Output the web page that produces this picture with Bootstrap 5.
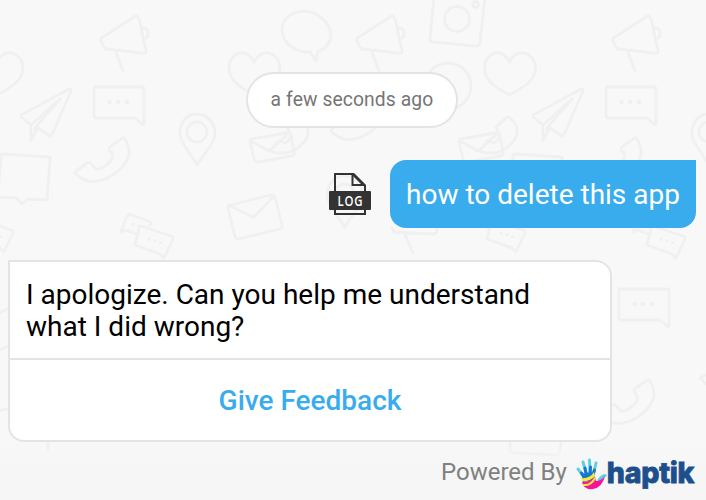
<!DOCTYPE html>
<html lang="en">
<head>
<meta charset="utf-8">
<meta name="viewport" content="width=device-width, initial-scale=1">
<title>Chat</title>
<link rel="stylesheet" href="https://cdn.jsdelivr.net/npm/bootstrap@5.3.0/dist/css/bootstrap.min.css">
<style>
body{font-family:Roboto,sans-serif;background:#f8f8f8}
.chat{height:500px;width:706px}
.wallpaper{z-index:0;fill:none;stroke:#f0f0f0;stroke-width:2.8;stroke-linejoin:round;stroke-linecap:round}
.wallpaper .dots{stroke-width:4.5}
.thread{z-index:1;padding:72px 10px 0 8px}
.stamp{width:212px;height:56px;border:2px solid #e4e4e4!important;color:#757575;font-size:19.3px;margin-left:238px;letter-spacing:.1px}
.outgoing{margin-top:32px}
.bubble-out{width:306px;height:68px;background:#39aced;border-radius:16px 0 16px 16px;font-size:28px;padding-top:1px}
.reply{width:604px;height:182px;margin-top:32px;border:2px solid #e4e4e4;border-radius:0 16px 16px 16px}
.reply-text{height:98px;padding:17px 16px 15px;font-size:28px;line-height:32px;color:#000;border-bottom:2px solid #e4e4e4}
.reply-btn{color:#39aced;font-size:28px;font-weight:500;border:0;padding:2px 0 0}
.powered{height:58px;padding:2px 12px 0 0;color:#808080;font-size:24px;background:linear-gradient(rgba(246,246,246,0),#f6f6f6 50%)}
.brand{font-family:Inter,sans-serif;font-weight:800;font-size:28.5px;letter-spacing:-.25px;margin-right:-.25px;color:#1c4f8b;-webkit-text-stroke:.8px #1c4f8b;padding-top:3px}
</style>
<script src="https://cdn.jsdelivr.net/npm/bootstrap@5.3.0/dist/js/bootstrap.bundle.min.js"></script>
</head>
<body class="overflow-hidden">
<main class="chat position-relative overflow-hidden d-flex flex-column">
<svg class="wallpaper position-absolute top-0 start-0" width="706" height="500" aria-hidden="true">
<defs>
<path id="horn" d="M103 37L134 17Q137 14 139 19L146 50Q147 54 142 53L107 49Q104 49 103 45L101 41Q101 38 103 37M115 50L123 71M142 28C148 27 150 34 146 38"/>
<path id="heart" d="M0 62C-8 46-25 53-25 68C-25 81-13 88 0 95C13 88 26 81 26 68C26 53 8 46 0 62Z"/>
<path id="plane" d="M21 115L69 89Q72 88 71 91L52 135Q51 137 49 135L38 128L31 140V125L21 117ZM31 125L60 99L35 128V134"/>
<g id="note"><path d="M95 87H142Q144 87 144 89V123Q144 126 141 123L135 118H96Q94 118 94 116V89Q94 87 95 87Z"/><path class="dots" d="M109.500 102h.1M118 102h.1M127 102h.1"/></g>
<g id="pin"><path d="M197 165L184 145C174 129 184 114 197 114S221 129 211 145Z"/><circle cx="197" cy="132" r="10"/></g>
<path id="phone" d="M124 138Q129 143 129 154Q127 165 113 175Q90 189 75 173L76 171L87 163Q90 161 92 165L96 169Q99 170 105 166Q115 159 112 154L109 149Q109 147 111 146L121 139Q123 137 124 138Z"/>
<path id="sheet" d="M2 154L48 157Q51 157 50 160L47 200L28 199L22 204L17 198L-2 197L1 157Q0 154 2 154Z"/>
<g id="talk"><path d="M141 226L171 236Q174 237 173 239L164 258L160 254L135 245L139 228Q140 225 141 226ZM150 225L151 222L129 214L126 218L121 232L126 230L136 234"/><path stroke-width="3" stroke-dasharray=".1 6" d="M149 239L162 243M133 224L140 227"/></g>
<g id="mail"><path d="M252 139L286 133Q290 132 291 135L294 153Q295 155 291 156L258 162Q255 162 254 159L250 142Q250 139 252 139ZM251 141L269 151L288 134"/><path d="M297 118Q299 116 301 118Q312 127 306 139Q296 154 280 153Q270 153 272 149L278 141L286 143Q290 140 291 135L287 127Z"/></g>
</defs>
<use href="#horn"/><use href="#horn" x="256"/><use href="#horn" x="512"/>
<use href="#heart" x="-3"/><use href="#heart" x="254"/><use href="#heart" x="509.500"/>
<use href="#plane"/><use href="#plane" x="512"/>
<use href="#note"/><use href="#note" x="512"/><use href="#note" x="525" y="202"/>
<use href="#pin"/><use href="#pin" x="147.500" y="62"/><use href="#pin" x="512"/>
<use href="#phone"/><use href="#phone" x="512"/><use href="#phone" x="525" y="242"/><use href="#phone" x="256" y="-42"/>
<use href="#sheet"/><use href="#sheet" x="512"/>
<use href="#talk"/><use href="#talk" x="512"/><use href="#talk" x="352" y="-6"/><use href="#talk" x="-160" y="-6"/>
<use href="#mail"/><use href="#mail" x="209"/>
<path d="M231 205L270 195Q274 194 275 197L282 225Q283 228 280 229L238 239Q236 239 235 237L228 208Q228 205 231 205ZM230 206L251 216Q254 218 256 215L274 196"/>
<path d="M310 52C295 53 283 43 282 31C281 19 292 11 305 11C319 12 331 24 331 36C330 45 325 49 318 51L316 61Z"/>
<path d="M434-2L430 39Q430 42 433 42L476 46Q480 46 480 42L485-2"/><circle cx="457" cy="19" r="12.500"/><circle cx="475.500" cy="4.500" r="3"/><circle cx="448" cy="86" r="23"/>
<path d="M392 228L394 232L433 234Q437 234 437 228M404 232L413 253M0 313Q4 310 8 309M0 350L8 346M0 411Q2 409 8 409M48 440V450M706 375L700 378L706 384M510 442V450Q510 453 514 453L557 455Q560 455 561 442"/>
</svg>
<section class="thread position-relative flex-grow-1">
<div class="stamp rounded-pill bg-white d-flex align-items-center justify-content-center">a few seconds ago</div>
<div class="outgoing d-flex justify-content-end align-items-center">
<svg width="42" height="42" viewBox="0 0 42 42" style="margin-right:19px" role="img" aria-label="Log file"><path d="M6 1H24L36 13V41H6ZM23.500 1V12H36" fill="none" stroke="#333" stroke-width="2"/><path d="M22 0H25L37 12V13H34L24 3Z" fill="#333"/><rect y="18" width="42" height="19" rx="1" fill="#333"/><text transform="translate(8.500 33.300) scale(.76 1)" font-family="Open Sans, sans-serif" font-weight="600" font-size="15" letter-spacing="1" fill="#fff">LOG</text></svg>
<div class="bubble-out text-white d-flex align-items-center justify-content-center text-nowrap">how to delete this app</div>
</div>
<article class="reply bg-white d-flex flex-column overflow-hidden">
<div class="reply-text">I apologize. Can you help me understand<br>what I did wrong?</div>
<button class="reply-btn btn flex-grow-1">Give Feedback</button>
</article>
</section>
<footer class="powered position-relative d-flex justify-content-end align-items-center text-nowrap">
<span class="powered-label">Powered By</span>
<svg class="ms-2 mt-1" width="32" height="34" viewBox="0 0 32 34" aria-hidden="true"><g fill="none" stroke-linecap="round"><g stroke="#62cfe0" stroke-width="3"><path d="M3 12L9 20M8 5L11 16M14.500 3L15 16M21 6L18 19M24 23Q27 19 30 18.500"/></g><g stroke="#1676d2" stroke-width="3"><path d="M6.500 16L9 20M10 11L11.500 19M15.500 10L15 19M19.500 13L17 21"/></g></g><path d="M7 17L20 14L19 23L8 25Z" fill="#1676d2"/><path d="M6 21Q15 22 19 15L20 19Q15 25 7 24Z" fill="#f7e934"/><path d="M7 25Q15 25 20 20L21 24Q26 24 30 19Q27 31 18 32Q11 33 8 28Z" fill="#f5149b"/><path d="M8 28Q16 29 20 21" stroke="#f7e934" stroke-width="2" fill="none"/></svg>
<span class="brand">haptik</span>
</footer>
</main>
</body>
</html>
